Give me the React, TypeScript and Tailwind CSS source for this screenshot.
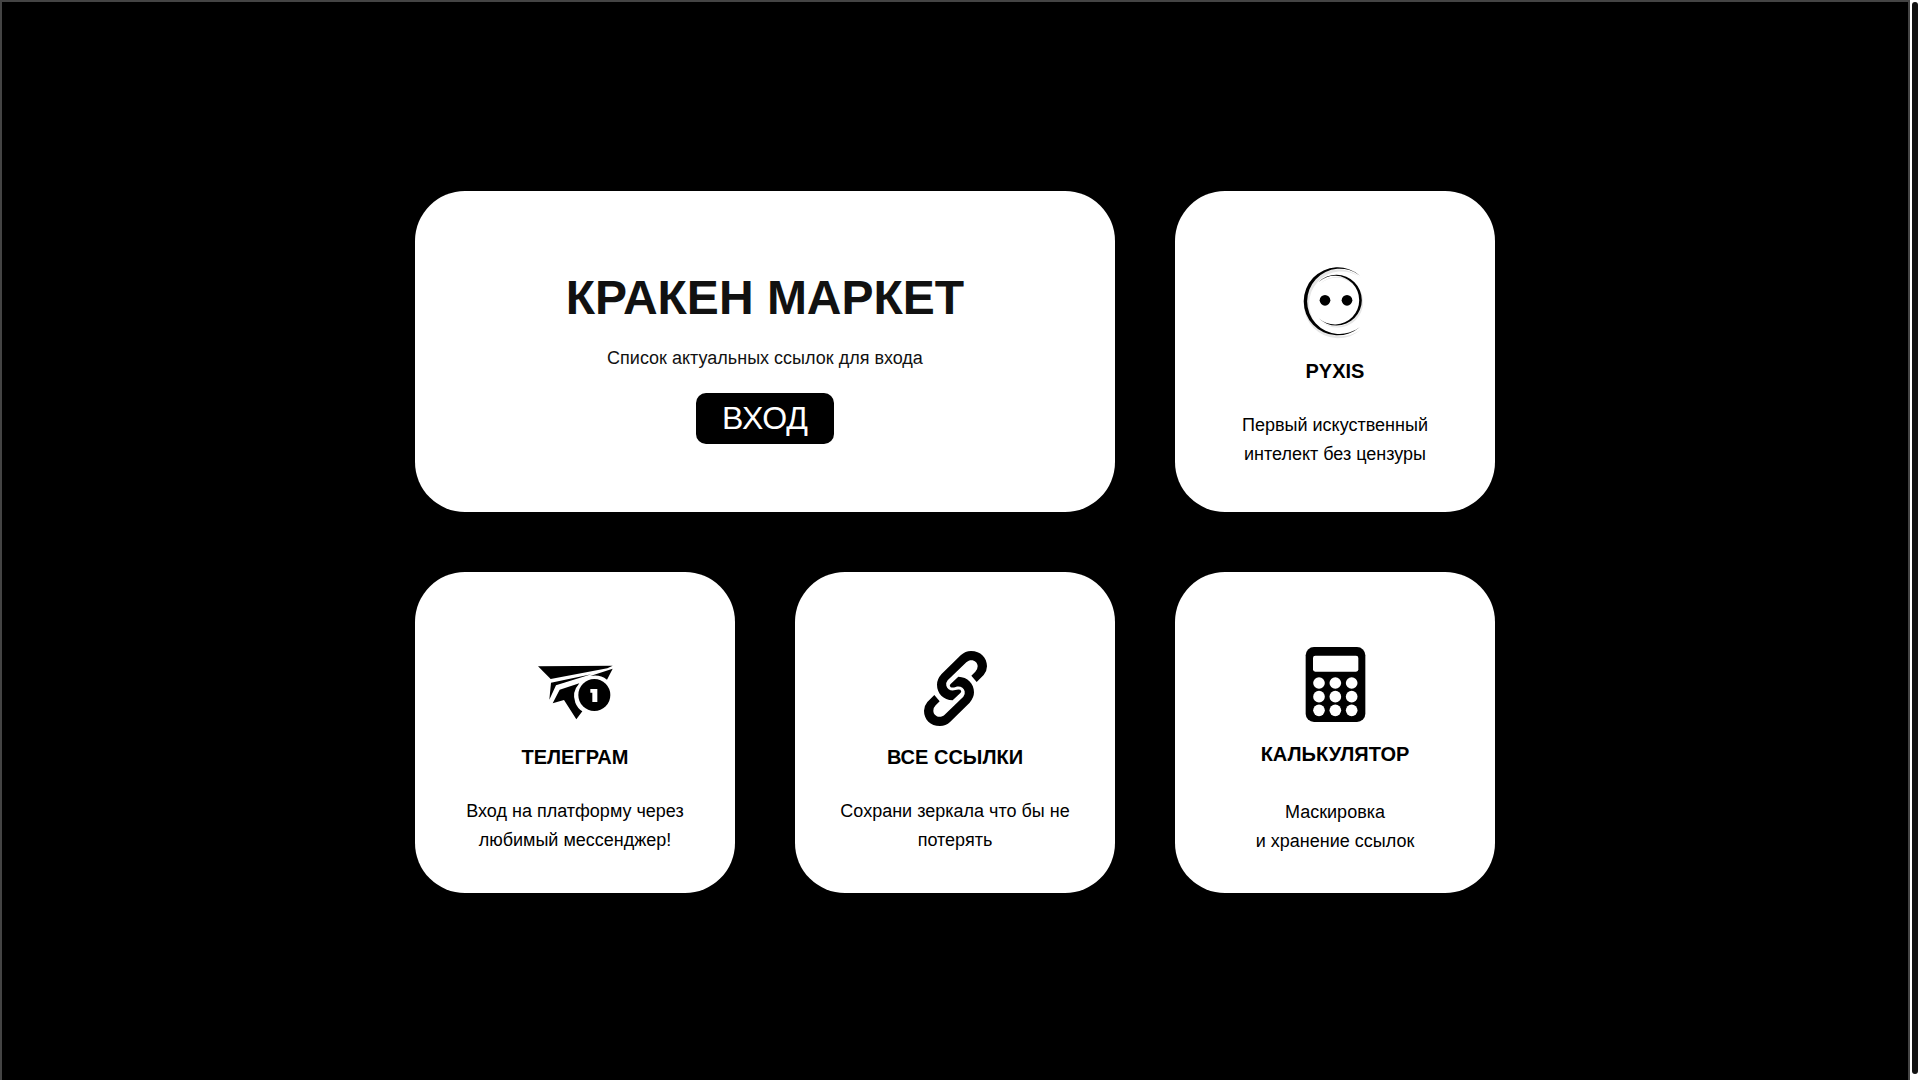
import React from 'react';

interface CardProps {
  icon: React.ReactNode;
  title: string;
  lines: [string, string];
  className: string;
  titleClassName: string;
}

const PyxisIcon = () => (
  <svg className="size-[75px]" viewBox="54 46 225 225" aria-hidden="true">
    <g fill="#e6e6e6">
      <path d="M240 79A103.4 103.4 0 1 0 240 232A97 97 0 1 1 240 79Z" transform="translate(4 7)" />
      <path d="M116 97A76.2 76.2 0 1 1 116 206A73 73 0 1 0 116 97Z" transform="translate(4 6)" />
    </g>
    <path d="M240 78A102 102 0 1 0 240 232A98 98 0 1 1 240 78Z" />
    <path d="M116 97A76.2 76.2 0 1 1 116 206A73 73 0 1 0 116 97Z" />
    <circle cx="135" cy="152" r="16" />
    <circle cx="201" cy="152" r="16" />
  </svg>
);

const TelegramIcon = () => (
  <svg className="size-[75px]" viewBox="54 33 225 225" aria-hidden="true">
    <path d="M54 79L278 77L262 85L92 117Z" />
    <path d="M93 128L214 103L108 136L88 179Z" />
    <path d="M98 190L119 149L178 130Q154 157 166 188Q172 204 187 214L169 238L132 180Z" />
    <path d="M211 108L278 86L261 119Q239 102 211 108Z" />
    <circle cx="223" cy="165" r="48" />
    <path d="M211 147H232V186H217V158H211Z" fill="#fff" />
  </svg>
);

const LINK_HALF =
  'M158 181C130 180 111 160 111 134Q111 118 124 103L182 46Q196 33 213 33C242 33 261 53 261 79Q261 93 251 105L230 126L214 107L226 95Q233 88 233 79C233 63 213 54 199 67L143 121Q137 128 139 137C142 149 154 154 166 150Q174 147 181 149Q186 153 182 158Z';

const LinkIcon = () => (
  <svg className="size-[75px]" viewBox="54 33 225 225" aria-hidden="true">
    <path d={LINK_HALF} />
    <path d={LINK_HALF} transform="rotate(180 166.5 145.5)" />
  </svg>
);

const CalculatorIcon = () => (
  <svg className="size-[75px]" viewBox="54 51 225 225" aria-hidden="true">
    <rect x="77" y="51" width="179" height="225" rx="25" />
    <rect x="99" y="77" width="136" height="48" rx="7" fill="#fff" />
    {[159, 200, 241].map((cy) =>
      [117, 166, 215].map((cx) => <circle key={`${cx}-${cy}`} cx={cx} cy={cy} r="17.5" fill="#fff" />)
    )}
  </svg>
);

const Card: React.FC<CardProps> = ({ icon, title, lines, className, titleClassName }) => (
  <a href="#" className={`flex min-h-[321px] flex-col items-center rounded-[50px] bg-white px-8 pb-6 text-center text-black ${className}`}>
    {icon}
    <h2 className={`text-xl leading-[30px] font-bold ${titleClassName}`}>{title}</h2>
    <p className="text-lg leading-[29px]">
      {lines[0]}
      <br />
      {lines[1]}
    </p>
  </a>
);

const App: React.FC = () => {
  return (
    <div className="flex h-screen bg-white font-['Liberation_Sans',Arial,sans-serif]">
      <main className="flex flex-1 items-center justify-center border-2 border-b-0 border-[#444] bg-black pt-[2px]">
        <div className="grid w-full max-w-[1080px] grid-cols-3 gap-[60px]">
          <section className="col-span-2 flex min-h-[321px] flex-col items-center rounded-[50px] bg-white pt-[79px] pb-6 text-center text-[#111]">
            <h1 className="text-5xl leading-[56px] font-bold">КРАКЕН МАРКЕТ</h1>
            <p className="mt-[18px] text-lg leading-[29px]">Список актуальных ссылок для входа</p>
            <button className="mt-5 rounded-[10px] bg-black px-[26px] py-[7px] text-[32px] leading-[37px] text-white">
              ВХОД
            </button>
          </section>
          <Card
            icon={<PyxisIcon />}
            title="PYXIS"
            lines={['Первый искуственный', 'интелект без цензуры']}
            className="pt-[74px]"
            titleClassName="mt-4 mb-[25px]"
          />
          <Card
            icon={<TelegramIcon />}
            title="ТЕЛЕГРАМ"
            lines={['Вход на платформу через', 'любимый мессенджер!']}
            className="pt-[79px]"
            titleClassName="mt-4 mb-[25px]"
          />
          <Card
            icon={<LinkIcon />}
            title="ВСЕ ССЫЛКИ"
            lines={['Сохрани зеркала что бы не', 'потерять']}
            className="pt-[79px]"
            titleClassName="mt-4 mb-[25px]"
          />
          <Card
            icon={<CalculatorIcon />}
            title="КАЛЬКУЛЯТОР"
            lines={['Маскировка', 'и хранение ссылок']}
            className="pt-[75px]"
            titleClassName="mt-[17px] mb-[29px]"
          />
        </div>
      </main>
      {/* scroll track */}
      <div className="flex w-[10px] bg-white px-[2px] pt-[2px] pb-[6px]">
        <div className="flex-1 rounded-full bg-[#111]" />
      </div>
    </div>
  );
};

export default App;
